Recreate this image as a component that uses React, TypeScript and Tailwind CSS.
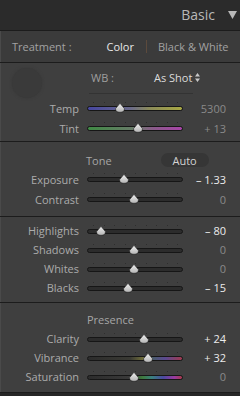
import React from 'react';

type Row = {
  label: string;
  value: string;
  pos: number;
  active?: boolean;
  track: string;
};

const NEUTRAL = 'bg-[#2c2c2c]';

const WB_ROWS: Row[] = [
  { label: 'Temp', value: '5300', pos: 34, track: 'bg-[linear-gradient(90deg,#4646a0,#6a6a8a_45%,#8a8a5a_65%,#a8a844)]' },
  { label: 'Tint', value: '+ 13', pos: 53, track: 'bg-[linear-gradient(90deg,#3f8a44,#6a7a6a_50%,#8a5a8a_70%,#a844a8)]' },
];

const TONE_ROWS: Row[] = [
  { label: 'Exposure', value: '– 1.33', pos: 38.5, active: true, track: NEUTRAL },
  { label: 'Contrast', value: '0', pos: 49, track: NEUTRAL },
];

const LEVEL_ROWS: Row[] = [
  { label: 'Highlights', value: '– 80', pos: 14.5, active: true, track: NEUTRAL },
  { label: 'Shadows', value: '0', pos: 49, track: NEUTRAL },
  { label: 'Whites', value: '0', pos: 49, track: NEUTRAL },
  { label: 'Blacks', value: '– 15', pos: 42.5, active: true, track: NEUTRAL },
];

const PRESENCE_ROWS: Row[] = [
  { label: 'Clarity', value: '+ 24', pos: 59, active: true, track: NEUTRAL },
  {
    label: 'Vibrance',
    value: '+ 32',
    pos: 63.5,
    active: true,
    track: 'bg-[linear-gradient(90deg,#2c2c2c,#3a3a34_45%,#6e6c3a_58%,#4a5a6e_70%,#5a4a90_82%,#a03a50)]',
  },
  {
    label: 'Saturation',
    value: '0',
    pos: 49,
    track: 'bg-[linear-gradient(90deg,#2c2c2c,#3a3a3a_45%,#3e7a3e_58%,#3a8080_68%,#4a4aa0_80%,#9a3aa0_92%,#a83a4a)]',
  },
];

const TICKS = [0, 1, 2, 3, 4, 5, 6, 7, 8];

function Slider({ pos, track }: { pos: number; track: string }) {
  return (
    <div className="relative h-[12px] w-[96px] shrink-0">
      {/* tick marks */}
      {TICKS.map((t) => (
        <span
          key={t}
          className="absolute top-0 h-px w-px bg-[#2e2e2e]"
          style={{ left: `${6 + t * 10.5}px` }}
        />
      ))}
      <div className={`absolute left-0 right-0 top-[4px] h-[5px] rounded-full border border-[#161616] ${track}`} />
      <svg
        className="absolute top-[1px]"
        style={{ left: `calc(${pos}% - 5px)` }}
        width="10"
        height="10"
        viewBox="0 0 10 10"
      >
        <defs>
          <linearGradient id="thumb" x1="0" y1="0" x2="0" y2="1">
            <stop offset="0" stopColor="#f0f0f0" />
            <stop offset="1" stopColor="#b4b4b4" />
          </linearGradient>
        </defs>
        <path
          d="M5 0.3 L9.4 5.6 Q9.8 9.3 5 9.3 Q0.2 9.3 0.6 5.6 Z"
          fill="url(#thumb)"
          stroke="#1c1c1c"
          strokeWidth="0.6"
        />
      </svg>
    </div>
  );
}

function SliderRow({ row, h = 'h-[19px]' }: { row: Row; h?: string }) {
  return (
    <div className={`flex items-center ${h}`}>
      <div className="w-[78px] text-right text-[11px] text-[#ababab]">{row.label}</div>
      <div className="ml-[8px]">
        <Slider pos={row.pos} track={row.track} />
      </div>
      <div
        className={`flex-1 pr-[14px] text-right text-[11px] ${row.active ? 'text-[#ececec]' : 'text-[#8a8a8a]'}`}
      >
        {row.value}
      </div>
    </div>
  );
}

function Line() {
  return <div className="h-px bg-[#1c1c1c]" />;
}

export default function App() {
  return (
    <div
      className="flex h-[396px] w-[240px] flex-col overflow-hidden bg-[#262626] leading-none"
      style={{ fontFamily: '"Open Sans", "Noto Sans", sans-serif' }}
    >
      {/* Header */}
      <div className="flex h-[30px] items-center justify-end bg-[#2b2b2b] pr-[3px]">
        <span className="text-[14px] text-[#b8b8b8]">Basic</span>
        <svg className="ml-[13px]" width="9" height="8" viewBox="0 0 9 8">
          <path d="M0 0 H9 L4.5 8 Z" fill="#b8b8b8" />
        </svg>
      </div>
      <Line />

      {/* Treatment */}
      <div className="flex h-[31px] items-center border-l border-[#4a4a4a] bg-[#3b3b3b] text-[11px]">
        <span className="pl-[11px] text-[#a2a2a2]">Treatment :</span>
        <span className="ml-[35px] text-[#e8e8e8]">Color</span>
        <span className="ml-[12px] h-[13px] w-px bg-[#5c4a3c]" />
        <span className="ml-[11px] text-[#a2a2a2]">Black &amp; White</span>
      </div>
      <Line />

      {/* White balance */}
      <div className="flex h-[78px] flex-col border-l border-[#4a4a4a] bg-[#3f3f3f] pt-[5px]">
        <div className="flex">
          <div className="ml-[11px] h-[30px] w-[30px] shrink-0 rounded-full bg-[#3a3a3a] shadow-[0_0_3px_#383838]" />
          <div className="ml-[47px] flex w-[104px] shrink-0 flex-col">
            <div className="flex h-[18px] items-center whitespace-nowrap text-[11px]">
              <span className="ml-[2px] shrink-0 text-[#9e9e9e]">WB :</span>
              <span className="ml-[40px] shrink-0 text-[#dcdcdc]">As Shot</span>
              <svg className="ml-[3px] shrink-0" width="5" height="9" viewBox="0 0 5 9">
                <path d="M2.5 0 L5 3.5 H0 Z M2.5 9 L5 5.5 H0 Z" fill="#c8c8c8" />
              </svg>
            </div>
            <div className="mt-[7px] h-px bg-[#333333]" />
          </div>
        </div>
        {WB_ROWS.map((r) => (
          <SliderRow key={r.label} row={r} h="h-[20px]" />
        ))}
      </div>
      <Line />

      {/* Tone */}
      <div className="flex h-[74px] flex-col border-l border-[#4a4a4a] bg-[#3f3f3f] pt-[11px]">
        <div className="flex h-[14px] items-center text-[11px]">
          <span className="ml-[85px] text-[#a6a6a6]">Tone</span>
          <span className="ml-[49px] flex h-[14px] w-[48px] items-center justify-center rounded-full bg-[#363636] text-[#d4d4d4]">
            Auto
          </span>
        </div>
        <div className="mt-[2px]">
          {TONE_ROWS.map((r) => (
            <SliderRow key={r.label} row={r} h="h-[20px]" />
          ))}
        </div>
      </div>
      <Line />

      {/* Highlights / Shadows */}
      <div className="flex h-[85px] flex-col border-l border-[#4a4a4a] bg-[#3f3f3f] pt-[4px]">
        {LEVEL_ROWS.map((r) => (
          <SliderRow key={r.label} row={r} />
        ))}
      </div>
      <Line />

      {/* Presence */}
      <div className="flex h-[89px] flex-col border-l border-[#4a4a4a] bg-[#3f3f3f] pt-[7px]">
        <div className="flex h-[19px] items-center text-[11px]">
          <span className="ml-[86px] text-[#a6a6a6]">Presence</span>
        </div>
        {PRESENCE_ROWS.map((r) => (
          <SliderRow key={r.label} row={r} />
        ))}
      </div>
      <Line />
    </div>
  );
}
